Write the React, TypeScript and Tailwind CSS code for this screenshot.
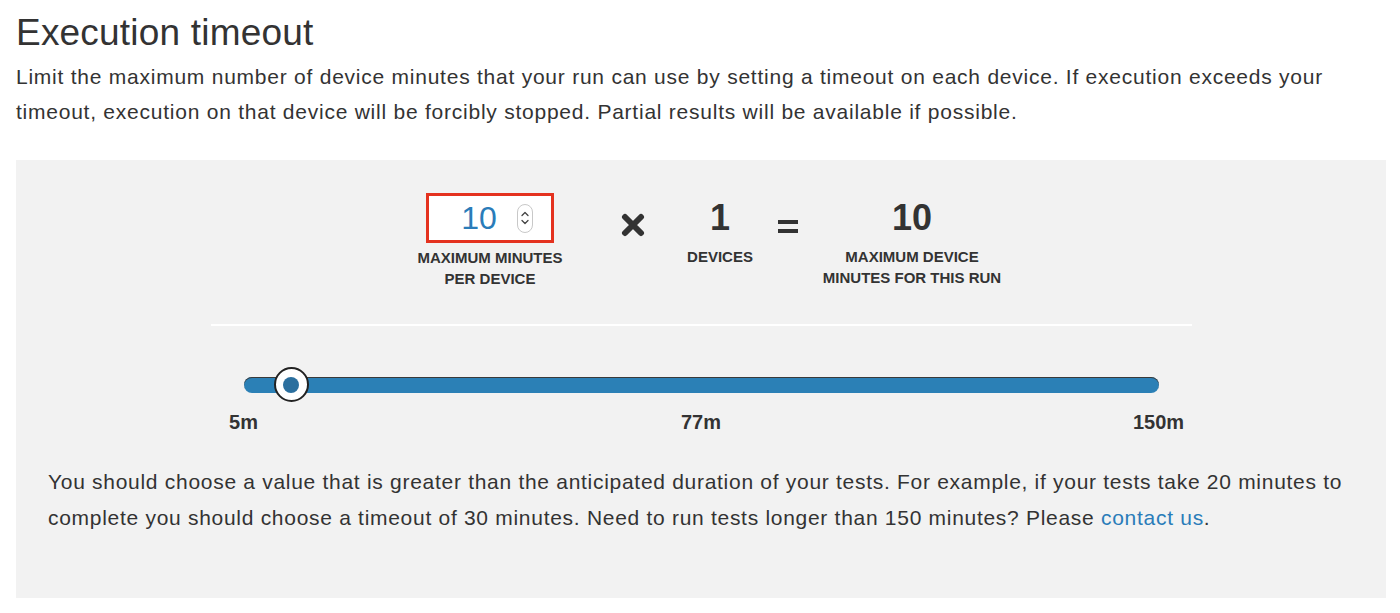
import React from "react";

function Spinner() {
  return (
    <div className="flex h-[29px] w-[16px] flex-col items-center justify-center rounded-full border border-[#c8c8c8] bg-white">
      <svg width="10" height="8" viewBox="0 0 10 8" fill="none" stroke="#444" strokeWidth="1.3" strokeLinecap="round" strokeLinejoin="round">
        <path d="M2 5.5 L5 2.5 L8 5.5" />
      </svg>
      <svg width="10" height="8" viewBox="0 0 10 8" fill="none" stroke="#444" strokeWidth="1.3" strokeLinecap="round" strokeLinejoin="round">
        <path d="M2 2.5 L5 5.5 L8 2.5" />
      </svg>
    </div>
  );
}

export default function App() {
  const font = { fontFamily: '"Liberation Sans", Arial, sans-serif' };
  return (
    <div className="min-h-[613px] w-[1400px] bg-white text-[#333]" style={font}>
      <div className="pl-4 pr-[14px] pt-[12px]">
        <h1 className="text-[37px] leading-[42px] font-normal tracking-[0.2px] text-[#333]">Execution timeout</h1>
        <p className="mt-[5px] whitespace-nowrap text-[21px] leading-[35px] tracking-[0.76px] text-[#333]">
          Limit the maximum number of device minutes that your run can use by setting a timeout on each device. If execution exceeds your
          <br />
          timeout, execution on that device will be forcibly stopped. Partial results will be available if possible.
        </p>
        <div className="mt-[31px] h-[438px] w-[1370px] bg-[#f2f2f2] pt-[33px]">
          <div className="flex items-start justify-center pl-[15px]">
            <div className="flex w-[150px] flex-col items-center">
              <div className="flex h-[50px] w-[128px] items-center border-[3px] border-[#e4321f] bg-white">
                <span className="flex-1 pl-[12px] text-center text-[32px] leading-none text-[#2a7cb9]">10</span>
                <div className="mr-[18px]"><Spinner /></div>
              </div>
              <div className="mt-[4px] whitespace-nowrap text-center text-[15px] font-bold leading-[21px] text-[#333]">
                MAXIMUM MINUTES<br />PER DEVICE
              </div>
            </div>
            <div className="ml-[56px] flex h-[50px] w-[24px] items-center justify-center pt-[14px]">
              <svg width="24" height="24" viewBox="0 0 24 24">
                <path d="M4 4 L20 20 M20 4 L4 20" stroke="#333" strokeWidth="6" strokeLinecap="round" />
              </svg>
            </div>
            <div className="ml-[35px] flex w-[80px] flex-col items-center">
              <div className="flex h-[50px] items-center text-[36px] font-bold leading-none text-[#333]">1</div>
              <div className="mt-[3px] text-center text-[15px] font-bold leading-[21px]">DEVICES</div>
            </div>
            <div className="ml-[18px] flex h-[50px] w-[20px] flex-col items-center justify-center gap-[5px] pt-[16px]">
              <div className="h-[4px] w-[20px] bg-[#333]" />
              <div className="h-[4px] w-[20px] bg-[#333]" />
            </div>
            <div className="ml-[24px] flex w-[180px] flex-col items-center">
              <div className="flex h-[50px] items-center text-[36px] font-bold leading-none text-[#333]">10</div>
              <div className="mt-[3px] whitespace-nowrap text-center text-[15px] font-bold leading-[21px]">
                MAXIMUM DEVICE<br />MINUTES FOR THIS RUN
              </div>
            </div>
          </div>

          <div className="mx-auto mt-[35px] h-[2px] w-[981px] bg-white" />

          <div className="mx-auto mt-[51px] w-[915px]">
            <div className="relative h-[16px] rounded-full bg-[#2b80b6] shadow-[inset_0_1px_0_#3a3a3a]">
              <div className="absolute left-[30px] top-[-10px] flex h-[35px] w-[35px] items-center justify-center rounded-full border-2 border-[#222] bg-white">
                <div className="h-[16px] w-[16px] rounded-full bg-[#2b6f9e]" />
              </div>
            </div>
            <div className="relative mt-[18px] h-[22px] text-[20px] font-bold leading-[22px]">
              <span className="absolute left-0 -translate-x-1/2">5m</span>
              <span className="absolute left-1/2 -translate-x-1/2">77m</span>
              <span className="absolute left-full -translate-x-1/2">150m</span>
            </div>
          </div>

          <p className="mt-[31px] whitespace-nowrap pl-[32px] text-[21px] leading-[36px] tracking-[0.71px] text-[#333]">
            You should choose a value that is greater than the anticipated duration of your tests. For example, if your tests take 20 minutes to
            <br />
            complete you should choose a timeout of 30 minutes. Need to run tests longer than 150 minutes? Please{" "}
            <a className="text-[#2a7cb9]" href="#">contact us</a>.
          </p>
        </div>
      </div>
    </div>
  );
}
